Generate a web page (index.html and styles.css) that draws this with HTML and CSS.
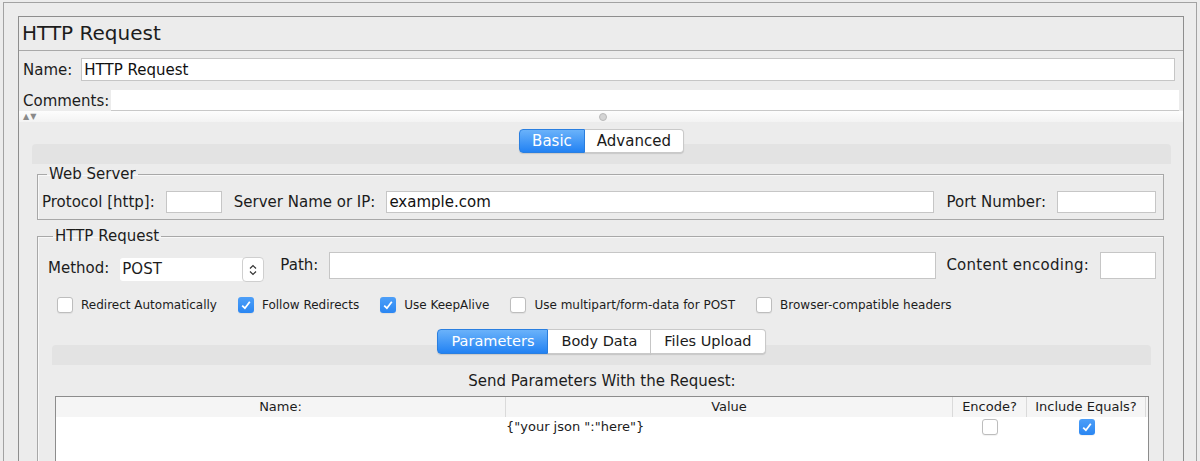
FILE: index.html
```html
<!DOCTYPE html>
<html lang="en">
<head>
    <meta charset="UTF-8">
    <title>HTTP Request</title>
    <link rel="stylesheet" href="styles.css">
</head>
<body>

    <div class="window">
        <div class="panel">
            <div class="panel-title">HTTP Request</div>

            <div class="meta">
                <div class="name-row">
                    <label>Name:</label>
                    <input class="field name-field" type="text" value="HTTP Request">
                </div>
                <div class="comments-row">
                    <label>Comments:</label>
                    <div class="comments-box"></div>
                </div>
            </div>

            <div class="splitter">
                <span class="arrows">&#9650;&#9660;</span>
                <span class="knob"></span>
                <span></span>
            </div>

            <div class="tabs-area">
                <div class="seg">
                    <span class="seg-btn on">Basic</span>
                    <span class="seg-btn">Advanced</span>
                </div>
                <div class="tab-body">

                    <fieldset class="group web">
                        <legend>Web Server</legend>
                        <div class="row">
                            <label>Protocol [http]:</label>
                            <input class="field proto" type="text">
                            <label>Server Name or IP:</label>
                            <input class="field server" type="text" value="example.com">
                            <label>Port Number:</label>
                            <input class="field port" type="text">
                        </div>
                    </fieldset>

                    <fieldset class="group req">
                        <legend>HTTP Request</legend>
                        <div class="row method-row">
                            <label class="method-label">Method:</label>
                            <div class="select">
                                <span class="select-value">POST</span>
                                <span class="stepper">
                                    <svg width="10" height="16" viewBox="0 0 10 16"><path d="M2 6.5 L5 3.5 L8 6.5 M2 9.5 L5 12.5 L8 9.5" fill="none" stroke="#333" stroke-width="1.2"/></svg>
                                </span>
                            </div>
                            <label>Path:</label>
                            <input class="field path" type="text">
                            <label class="enc-label">Content encoding:</label>
                            <input class="field encoding" type="text">
                        </div>

                        <div class="checks">
                            <span class="check-item"><span class="check"></span>Redirect Automatically</span>
                            <span class="check-item"><span class="check on"><svg width="16" height="16" viewBox="0 0 16 16"><path d="M4.2 8.6 L6.9 11.2 L11.8 4.8" fill="none" stroke="#fff" stroke-width="1.8"/></svg></span>Follow Redirects</span>
                            <span class="check-item"><span class="check on"><svg width="16" height="16" viewBox="0 0 16 16"><path d="M4.2 8.6 L6.9 11.2 L11.8 4.8" fill="none" stroke="#fff" stroke-width="1.8"/></svg></span>Use KeepAlive</span>
                            <span class="check-item"><span class="check"></span>Use multipart/form-data for POST</span>
                            <span class="check-item"><span class="check"></span>Browser-compatible headers</span>
                        </div>

                        <div class="inner-tabs">
                            <div class="seg small">
                                <span class="seg-btn on">Parameters</span>
                                <span class="seg-btn">Body Data</span>
                                <span class="seg-btn">Files Upload</span>
                            </div>
                            <div class="tab-body inner">
                                <div class="caption">Send Parameters With the Request:</div>
                                <div class="params">
                                    <div class="th">Name:</div>
                                    <div class="th">Value</div>
                                    <div class="th">Encode?</div>
                                    <div class="th">Include Equals?</div>
                                    <div class="th end"></div>

                                    <div class="td"></div>
                                    <div class="td value">{"your json ":"here"}</div>
                                    <div class="td center"><span class="check"></span></div>
                                    <div class="td center"><span class="check on"><svg width="16" height="16" viewBox="0 0 16 16"><path d="M4.2 8.6 L6.9 11.2 L11.8 4.8" fill="none" stroke="#fff" stroke-width="1.8"/></svg></span></div>
                                    <div class="td"></div>
                                </div>
                            </div>
                        </div>
                    </fieldset>

                </div>
            </div>
        </div>
    </div>

</body>
</html>
```

FILE: styles.css
```css
body {
    margin: 0;
    height: 461px;
    overflow: hidden;
    background: #ececec;
    font-family: "DejaVu Sans", sans-serif;
    color: #1c1c1c;
}
.window {
    margin: 2px 3px 0 3px;
    height: 459px;
    box-sizing: border-box;
    border: 1px solid #a2a2a2;
    border-bottom: none;
    padding: 13px 12px 0 14px;
}
.panel {
    height: 100%;
    border: 1px solid #8e8e8e;
    border-bottom: none;
    overflow: hidden;
}
.panel-title {
    height: 33px;
    line-height: 33px;
    font-size: 20px;
    padding-left: 3px;
    border-bottom: 1px solid #a9a9a9;
}
.meta {
    padding: 0 4px;
    font-size: 15px;
}
.field {
    box-sizing: border-box;
    height: 22px;
    margin: 0;
    padding: 0 2px;
    border: 1px solid #c6c6c6;
    border-radius: 0;
    background: #fff;
    font: 15px "DejaVu Sans", sans-serif;
    color: #111;
    outline: none;
}
.name-row {
    display: flex;
    align-items: center;
    margin-top: 7px;
}
.name-row label {
    margin-right: 9px;
}
.name-field {
    flex: 1;
    height: 23px;
    margin-right: 4px;
}
.comments-row {
    display: flex;
    align-items: center;
    margin-top: 9px;
    height: 21px;
}
.comments-row label {
    margin-right: 2px;
}
.comments-box {
    flex: 1;
    height: 21px;
    box-sizing: border-box;
    background: #fff;
    border-bottom: 1px solid #c8c8c8;
}
.splitter {
    display: grid;
    grid-template-columns: 1fr auto 1fr;
    align-items: center;
    height: 11px;
    padding-left: 4px;
    background: linear-gradient(#fdfdfd, #f3f3f3);
}
.arrows {
    font-size: 8px;
    color: #8a8a8a;
    letter-spacing: 1px;
}
.knob {
    width: 6px;
    height: 6px;
    border-radius: 50%;
    background: #d4d4d4;
    border: 1px solid #b9b9b9;
}
.tabs-area {
    padding: 7px 12px 0 13px;
}
.seg {
    display: flex;
    justify-content: center;
    position: relative;
    z-index: 1;
}
.seg-btn {
    height: 22px;
    line-height: 22px;
    padding: 0 12px;
    font-size: 15px;
    background: #fff;
    border: 1px solid #c9c9c9;
    border-left: none;
    box-shadow: 0 1px 1px rgba(0, 0, 0, 0.12);
    color: #1a1a1a;
}
.seg-btn:first-child {
    border-left: 1px solid #c9c9c9;
    border-radius: 4px 0 0 4px;
}
.seg-btn:last-child {
    border-radius: 0 4px 4px 0;
}
.seg-btn.on {
    background: linear-gradient(#6ab2fa, #2282f3);
    border-color: #2a7fe0;
    color: #fff;
}
.tab-body {
    margin-top: -9px;
    padding: 21px 7px 0 5px;
    background: linear-gradient(#e3e3e3 0, #e3e3e3 20px, #ececec 20px);
    border-radius: 4px 4px 0 0;
    height: 400px;
}
.group {
    margin: 0;
    border: 1px solid #a8a8a8;
    box-shadow: inset 1px 1px 0 #f8f8f8;
    font-size: 15px;
}
.group legend {
    padding: 0 2px;
    margin-left: 5px;
    line-height: 18px;
}
.web {
    padding: 8px 7px 6px 4px;
}
.req {
    margin-top: 7px;
    padding: 7px 7px 0 10px;
    height: 300px;
}
.row {
    display: flex;
    align-items: center;
}
.row label {
    margin-right: 11px;
    white-space: nowrap;
}
.proto {
    width: 56px;
    margin-right: 12px;
}
.server {
    flex: 1;
    margin-right: 12px;
}
.port {
    width: 99px;
}
.method-row {
    align-items: flex-start;
    height: 27px;
}
.method-row label {
    line-height: 27px;
}
.method-row .method-label {
    margin-top: 3px;
}
.select {
    display: flex;
    width: 144px;
    height: 23px;
    margin: 6px 16px 0 0;
    background: #fff;
    border-radius: 3px;
}
.select-value {
    flex: 1;
    padding-left: 2px;
    line-height: 23px;
}
.stepper {
    width: 20px;
    margin: -1px 0;
    display: flex;
    align-items: center;
    justify-content: center;
    border: 1px solid #cfcfcf;
    border-radius: 4px;
    background: #fff;
}
.path {
    flex: 1;
    height: 27px;
    margin-right: 10px;
}
.method-row .enc-label {
    letter-spacing: 0.25px;
}
.encoding {
    width: 56px;
    height: 27px;
}
.checks {
    display: flex;
    align-items: center;
    margin: 18px 0 0 9px;
    font-size: 12px;
    gap: 21px;
}
.check-item {
    display: flex;
    align-items: center;
    gap: 8px;
}
.check {
    box-sizing: border-box;
    display: inline-block;
    width: 16px;
    height: 16px;
    border: 1px solid #bdbdbd;
    border-radius: 3px;
    background: #fff;
    box-shadow: 0 1px 1px rgba(0, 0, 0, 0.06);
}
.check.on {
    border: none;
    background: linear-gradient(#4d9ff8, #2a86f2);
}
.check svg {
    display: block;
}
.inner-tabs {
    margin: 16px 5px 0 4px;
}
.seg.small .seg-btn {
    font-size: 14.5px;
    padding: 0 13px;
    height: 23px;
    line-height: 23px;
}
.tab-body.inner {
    padding: 20px 2px 0 3px;
    height: 200px;
}
.caption {
    height: 31px;
    line-height: 32px;
    text-align: center;
}
.params {
    display: grid;
    grid-template-columns: 450px 447px 74px 119px 1fr;
    grid-template-rows: 20px 20px;
    height: 200px;
    align-content: start;
    background: #fff;
    border: 1px solid #8c8c8c;
    border-bottom: none;
    font-size: 13px;
}
.th {
    background: #f5f5f5;
    text-align: center;
    line-height: 20px;
    border-right: 1px solid #dadada;
}
.th.end {
    border-right: none;
}
.td {
    line-height: 20px;
}
.td.center {
    display: flex;
    align-items: center;
    justify-content: center;
}
```
